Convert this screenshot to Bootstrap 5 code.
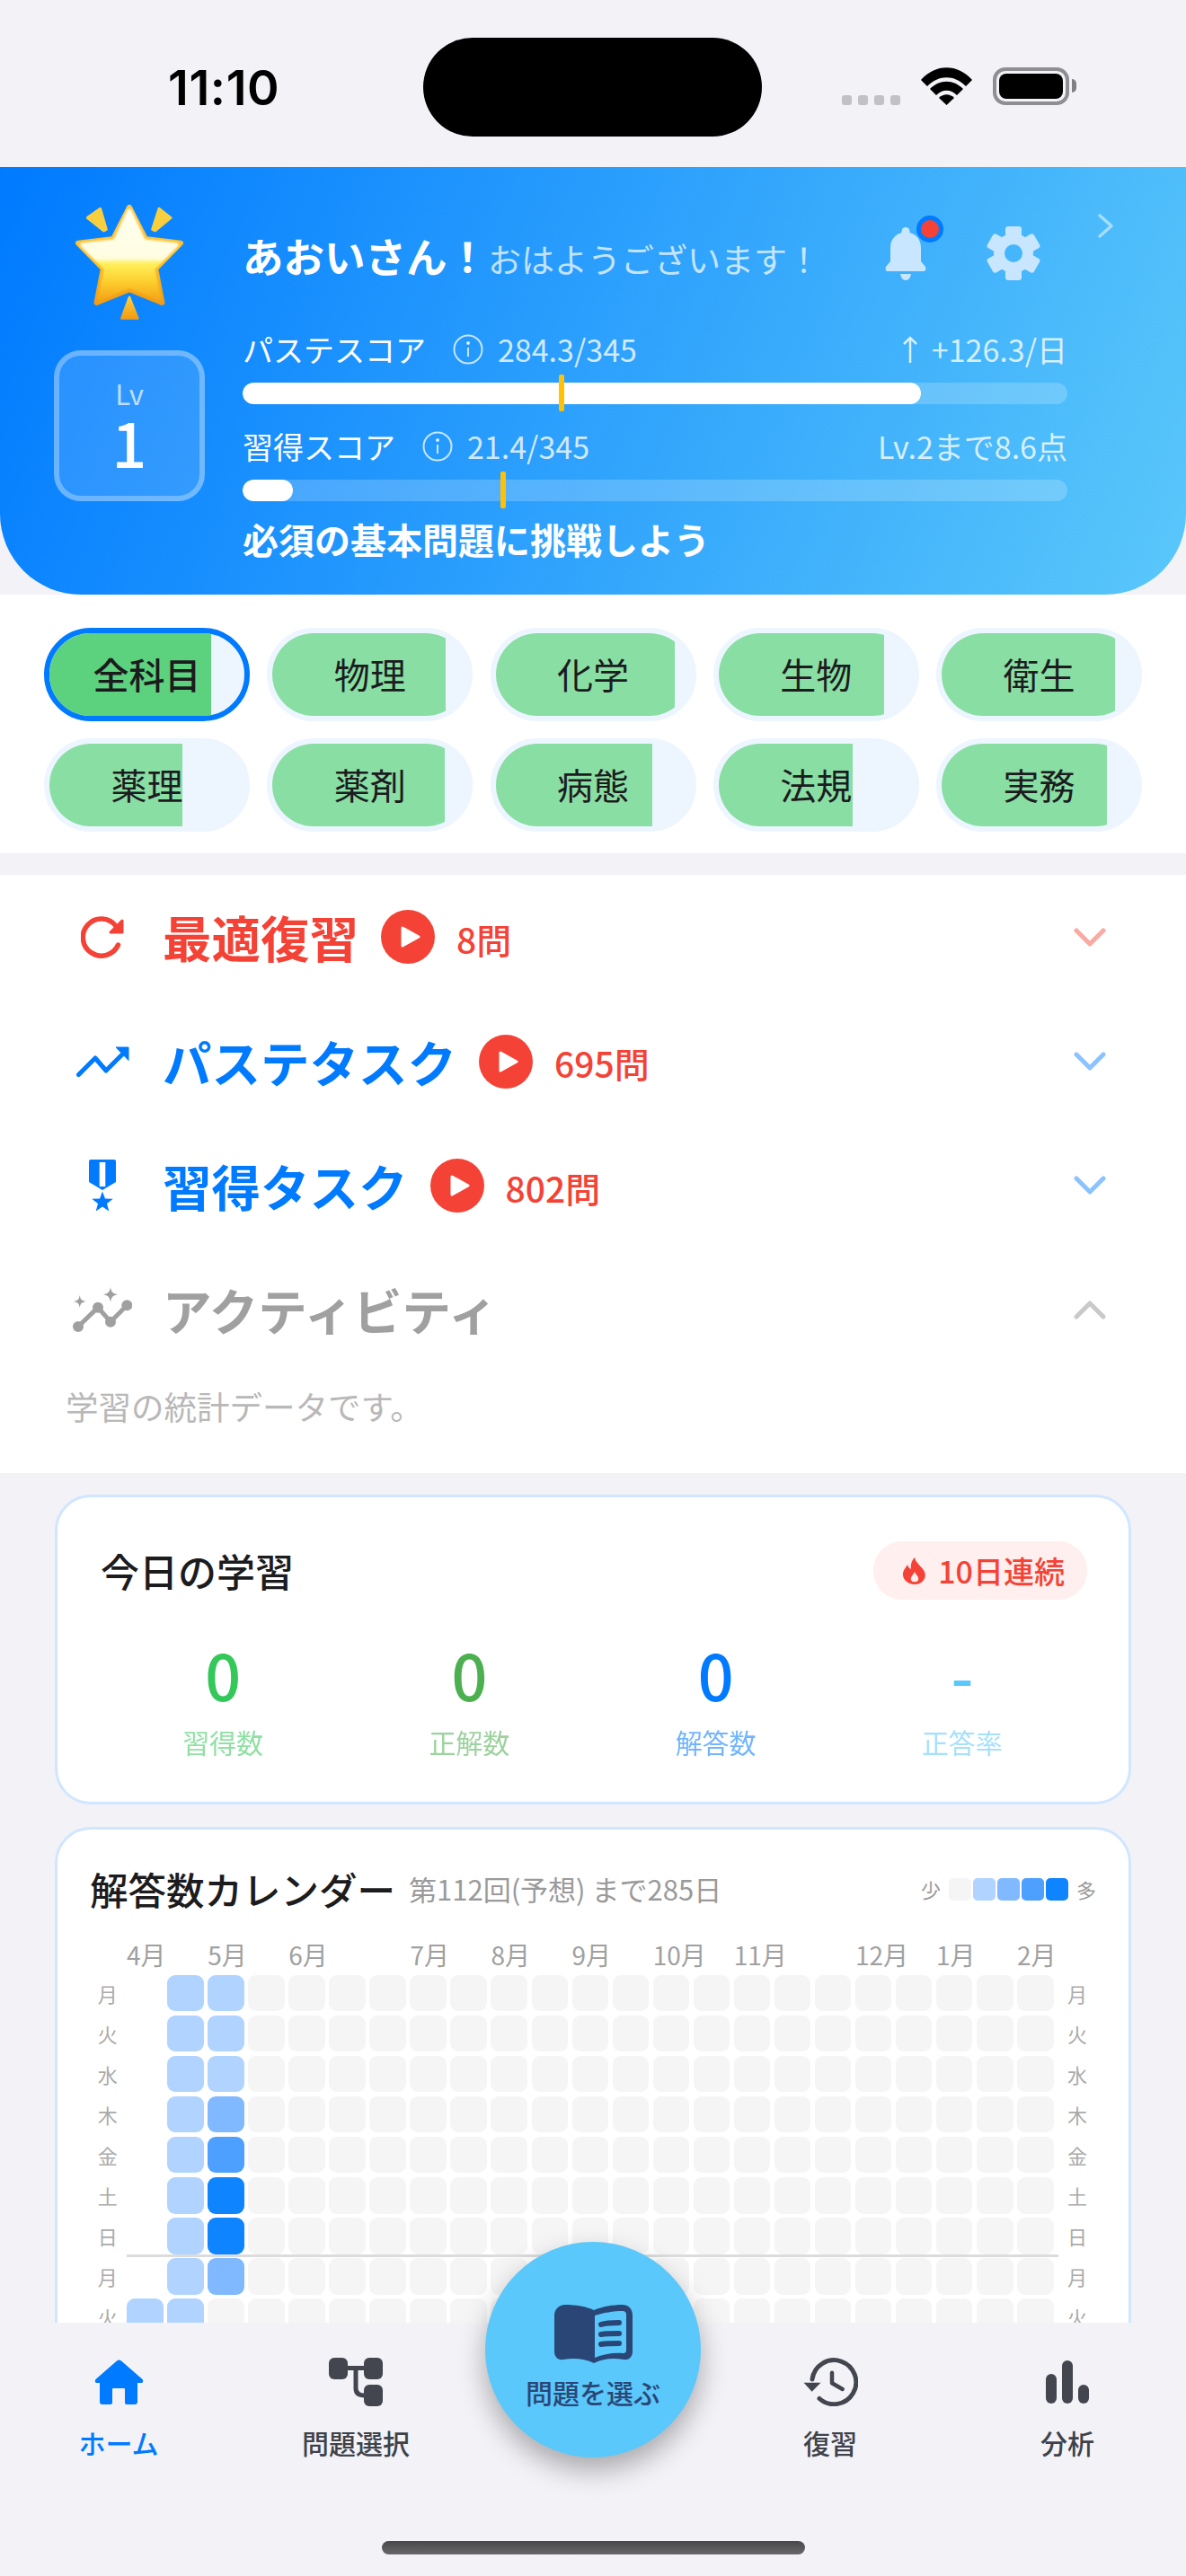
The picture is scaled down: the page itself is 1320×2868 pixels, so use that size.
<!DOCTYPE html>
<html lang="ja">

<head>
  <meta charset="UTF-8">
  <meta name="viewport" content="width=device-width, initial-scale=1">
  <title>ホーム</title>
  <link href="https://cdn.jsdelivr.net/npm/bootstrap@5.3.3/dist/css/bootstrap.min.css" rel="stylesheet">

  <style>
    body {
      width: 1320px;
      height: 2868px;
      overflow: hidden;
      background-color: #f2f2f7;
      font-family: "Noto Sans CJK JP", "Noto Sans", sans-serif;
      color: #1c1c1e;
    }

    /* status bar */
    .status-bar { height: 186px; flex: none; padding-left: 187px; }
    .status-time { width: 284px; margin-top: 68px; font-family: Inter, sans-serif; font-weight: 600; font-size: 54px; line-height: 60px; letter-spacing: .6px; color: #000; }
    .status-island { width: 377px; height: 110px; margin-top: 42px; background: #000; border-radius: 55px; }
    .status-dots { margin: 106px 0 0 89px; gap: 7px; width: 88px; }
    .status-dots i { width: 11px; height: 11px; border-radius: 3px; background: #c1c1c6; }
    .status-wifi { margin-top: 75px; }
    .status-batt { margin: 75px 0 0 23px; width: 85px; height: 42px; padding: 3px; border: 4px solid #8e8e93; border-radius: 14px; position: relative; }
    .status-batt i { display: block; height: 100%; background: #000; border-radius: 8px; }
    .status-batt::after { content: ""; position: absolute; right: -12px; top: 9px; width: 5px; height: 15px; background: #7f7f84; border-radius: 0 5px 5px 0; }

    /* scroll area */
    .app-scroll { flex: 1; min-height: 0; overflow: hidden; }

    /* header */
    .hero { height: 476px; padding: 40px 0 0 60px; background: linear-gradient(112deg, #007aff 0%, #5ac8fa 100%); border-radius: 0 0 90px 90px; color: #fff; }
    .hero-left { width: 168px; flex: none; }
    .hero-star { display: block; margin: 0 auto 33px; }
    .lv-box { height: 168px; background: rgba(255, 255, 255, .13); border: 6px solid rgba(255, 255, 255, .3); border-radius: 30px; }
    .lv-small { font-size: 31px; line-height: 30px; color: rgba(255, 255, 255, .7); margin-top: 27px; }
    .lv-num { font-size: 68px; line-height: 72px; font-weight: 500; margin-top: 3px; }
    .hero-right { width: 969px; margin-left: 42px; padding-top: 12px; }
    .hero-top { height: 129px; }
    .hero-hello { margin-top: 16px; line-height: 60px; font-size: 45.5px; font-weight: 700; width: 715px; flex: none; white-space: nowrap; }
    .hero-hello small { font-size: 37px; font-weight: 400; color: rgba(255, 255, 255, .72); }
    .hero-bell { position: relative; margin-top: 15px; width: 46px; height: 59px; flex: none; }
    .hero-dot { position: absolute; left: 35px; top: -13px; width: 30px; height: 30px; background: #f44336; border: 5px solid #007aff; border-radius: 50%; }
    .hero-gear { margin: 14px 0 0 67px; flex: none; }
    .hero-next { margin-left: 64px; flex: none; }
    .score-wrap { width: 918px; }
    .score-line { height: 44px; font-size: 34px; line-height: 44px; }
    .score-info { margin: 0 16px 0 30px; flex: none; }
    .score-val { color: rgba(255, 255, 255, .78); font-size: 34px; }
    .score-second { margin-top: 25px; }
    .score-track { position: relative; margin-top: 15px; }
    .score-track .progress { height: 24px; background: rgba(255, 255, 255, .2); border-radius: 12px; }
    .score-track .progress-bar { background: #fff; border-radius: 12px; }
    .score-mark { position: absolute; top: -9px; width: 6px; height: 41px; background: #ffc107; border-radius: 2px; }
    .hero-hint { margin-top: 17px; font-size: 40px; line-height: 50px; font-weight: 700; }

    /* chips */
    .subject-sec { height: 288px; padding: 37px 0 0 49px; background: #fff; }
    .subject-grid { display: grid; grid-template-columns: repeat(5, 229px); gap: 19px 19.25px; }
    .subject-chip { position: relative; height: 104px; overflow: hidden; background: #edf5ff; border: 6px solid #edf5ff; border-radius: 52px; font-size: 40px; line-height: 90px; text-align: center; }
    .subject-chip.is-on { border-color: #007aff; font-weight: 500; }
    .subject-fill { position: absolute; left: 0; top: 0; bottom: 0; background: #89dea4; }
    .is-on .subject-fill { background: #5cd27f; }
    .subject-name { position: relative; }

    /* task list */
    .task-sec { height: 666px; margin-top: 24px; background: #fff; }
    .task-row { height: 138.4px; padding: 0 89px 0 73px; }
    .task-ico { width: 82px; flex: none; }
    .task-title { margin-left: 26px; font-size: 54.5px; font-weight: 700; line-height: 70px; white-space: nowrap; }
    .task-play { width: 60px; height: 60px; margin-left: 25px; flex: none; }
    .task-count { margin-left: 24px; font-size: 39px; font-weight: 500; color: #f44336; padding-top: 4px; }
    .c-red { color: #f44336; }
    .c-blue { color: #007aff; }
    .c-gray { color: #a0a0a0; }
    .task-desc { margin: 13px 0 0 73px; font-size: 36.5px; line-height: 50px; color: #b8b8b8; }

    /* cards */
    .card-area { padding: 24px 61px 0; }
    .stat-card { background: #fff; border: 3px solid #d0e6ff; border-radius: 40px; }
    .today-card { height: 345px; padding: 49px 48px 0 47px; margin-bottom: 25px; }
    .today-title { margin-left: 1px; font-size: 43px; font-weight: 500; }
    .streak { height: 65px; margin-right: -2px; padding: 0 25px 0 32px; background: #ffefee; border-radius: 32px; font-size: 34px; font-weight: 500; color: #f44336; gap: 12px; }
    .today-nums { margin-top: 41px; }
    .today-num { font-size: 70px; line-height: 84px; font-weight: 500; }
    .today-lbl { margin-top: 13px; font-size: 30px; line-height: 40px; opacity: .55; }
    .c-green1 { color: #34c759; }
    .c-green2 { color: #4caf50; }
    .c-sky { color: #5ac8fa; }
    .cal-card { padding: 36px 36px 40px; }
    .cal-title { font-size: 42.5px; font-weight: 500; line-height: 60px; white-space: nowrap; }
    .cal-sub { margin-left: 15px; font-size: 31px; color: #9a9a9a; white-space: nowrap; }
    .cal-legend { gap: 2px; font-size: 22px; color: #9a9a9a; }
    .cal-legend i { width: 25px; height: 25px; border-radius: 5px; }
    .cal-legend span:first-child { margin-right: 7px; }
    .cal-legend span:last-child { margin-left: 7px; }
    .lv0 { background: #f5f5f5; }
    .lv1 { background: #b0d4ff; }
    .lv2 { background: #80b9ff; }
    .lv3 { background: #4da0ff; }
    .lv4 { background: #0f84ff; }
    .cal-grid { position: relative; display: grid; margin: 27px 0 0 3px; grid-template-columns: 33.5px repeat(23, 40.5px) 44px; grid-template-rows: 34px; grid-auto-rows: 40.55px; gap: 4.55px; }
    .cal-month { font-size: 28px; line-height: 32px; color: #a0a0a0; white-space: nowrap; }
    .cal-day { font-size: 22px; line-height: 40px; color: #aaa; text-align: center; }
    .cal-cell { border-radius: 9px; }
    .cal-line { position: absolute; left: 38px; top: 350px; width: 1037px; height: 3px; background: #dcdcdc; }

    /* bottom nav */
    .tab-bar { position: relative; height: 282px; flex: none; background: #f2f2f7; }
    .tab-item { width: 264px; padding-top: 39px; font-size: 30px; font-weight: 500; color: #3f424a; }
    .tab-item.is-on { color: #007aff; }
    .tab-ico { height: 54px; }
    .tab-lbl { margin-top: 20px; line-height: 40px; }
    .tab-fab { position: absolute; left: 540px; top: -90px; z-index: 5; width: 240px; height: 240px; padding-top: 70px; background: #5ac8fa; border-radius: 50%; box-shadow: 0 14px 30px rgba(0, 0, 0, .3); color: #2a4677; font-size: 30px; font-weight: 500; }
    .tab-fab div { line-height: 40px; margin-top: 12px; }
    .home-bar { width: 471px; height: 15px; margin: 90px auto 0; border-radius: 8px; background: linear-gradient(#48484a, #68686b); }
  </style>
</head>

<body class="d-flex flex-column">

  <!-- ステータスバー -->
  <div class="status-bar d-flex align-items-start">
    <div class="status-time">11:10</div>
    <div class="status-island"></div>
    <div class="status-dots d-flex"><i></i><i></i><i></i><i></i></div>
    <svg class="status-wifi" width="57" height="42" viewBox="0 0 57 42" fill="#000">
      <path d="M0 14C16-4.500 41-4.500 57 14L50 21C37 8 20 8 7 21Z"/>
      <path d="M10 24C21 13 36 13 47 24L40 31C33 24 24 24 17 31Z"/>
      <path d="M20 34C25 29 32 29 37 34L28.500 42Z"/>
    </svg>
    <div class="status-batt"><i></i></div>
  </div>

  <div class="app-scroll">

    <!-- ヘッダー -->
    <div class="hero d-flex">
      <div class="hero-left">
        <svg class="hero-star" width="122" height="131" viewBox="128 78 368 394">
          <defs>
            <linearGradient id="starFill" x1="0" y1="0" x2="0" y2="1">
              <stop offset="0" stop-color="#fffff0"/>
              <stop offset=".54" stop-color="#fffde0"/>
              <stop offset=".6" stop-color="#fff05c"/>
              <stop offset=".8" stop-color="#fdd030"/>
              <stop offset="1" stop-color="#f6a81a"/>
            </linearGradient>
            <linearGradient id="starEdge" x1="0" y1="0" x2="0" y2="1">
              <stop offset="0" stop-color="#fdc544"/>
              <stop offset=".5" stop-color="#fbc02d"/>
              <stop offset="1" stop-color="#f29c12"/>
            </linearGradient>
            <linearGradient id="sparkLow" x1="0" y1="0" x2="0" y2="1">
              <stop offset="0" stop-color="#fbcf3d"/>
              <stop offset="1" stop-color="#f39c12"/>
            </linearGradient>
            <filter id="starSoft" x="-10%" y="-10%" width="120%" height="120%"><feGaussianBlur stdDeviation="4"/></filter>
          </defs>
          <path d="M312 92L366 198 484 212 400 298 422 412 312 368 202 412 224 298 140 212 258 198Z" fill="url(#starEdge)" stroke="url(#starEdge)" stroke-width="18" stroke-linejoin="round"/>
          <path d="M312 104L360 206 470 218 390 298 412 398 312 356 212 398 234 298 154 218 264 206Z" fill="url(#starFill)" stroke="url(#starFill)" stroke-width="14" stroke-linejoin="round" filter="url(#starSoft)"/>
          <path d="M172 127L214 97 234 166 226 170Z" fill="#f7cf3f" stroke="#f7cf3f" stroke-width="10" stroke-linejoin="round"/>
          <path d="M390 166L412 97 450 127 398 170Z" fill="#f7cf3f" stroke="#f7cf3f" stroke-width="10" stroke-linejoin="round"/>
          <path d="M312 394L340 465 286 465Z" fill="url(#sparkLow)" stroke="url(#sparkLow)" stroke-width="8" stroke-linejoin="round"/>
        </svg>
        <div class="lv-box text-center">
          <div class="lv-small">Lv</div>
          <div class="lv-num">1</div>
        </div>
      </div>

      <div class="hero-right">
        <div class="hero-top d-flex align-items-start">
          <div class="hero-hello">あおいさん！<small>おはようございます！</small></div>
          <div class="hero-bell">
            <svg width="46" height="59" viewBox="0 0 46 59" fill="#c8e6ff" class="d-block">
              <path d="M23 0A4.500 4.500 0 0 1 27.500 4.500V6C35 8 40 14 40 23V38L45 44C46 47 45 49 43 49H3C1 49 0 47 1 44L6 38V23C6 14 11 8 18.500 6V4.500A4.500 4.500 0 0 1 23 0Z"/>
              <path d="M17 52H29C28 57 26 59 23 59 20 59 18 57 17 52Z"/>
            </svg>
            <span class="hero-dot"></span>
          </div>
          <svg class="hero-gear" width="60" height="60" viewBox="0 0 60 60" fill="#c8e6ff">
            <circle cx="30" cy="30" r="16" fill="none" stroke="#c8e6ff" stroke-width="12"/>
            <rect x="21" y="0" width="18" height="14" rx="3"/>
            <rect x="21" y="0" width="18" height="14" rx="3" transform="rotate(60 30 30)"/>
            <rect x="21" y="0" width="18" height="14" rx="3" transform="rotate(120 30 30)"/>
            <rect x="21" y="0" width="18" height="14" rx="3" transform="rotate(180 30 30)"/>
            <rect x="21" y="0" width="18" height="14" rx="3" transform="rotate(240 30 30)"/>
            <rect x="21" y="0" width="18" height="14" rx="3" transform="rotate(300 30 30)"/>
          </svg>
          <svg class="hero-next" width="17" height="27" viewBox="0 0 17 27" fill="none" stroke="rgba(255,255,255,.5)" stroke-width="3.500" stroke-linecap="round" stroke-linejoin="round">
            <path d="M2 2L15 13.500 2 25"/>
          </svg>
        </div>

        <div class="score-wrap">
          <div class="score-line d-flex align-items-center">
            <span>パステスコア</span>
            <svg class="score-info" width="34" height="34" viewBox="0 0 34 34" fill="none" stroke="rgba(255,255,255,.75)" stroke-width="2">
              <circle cx="17" cy="17" r="15.500"/>
              <path d="M17 15V25"/>
              <circle cx="17" cy="10" r="1" fill="#fff"/>
            </svg>
            <span class="score-val">284.3/345</span>
            <span class="score-val ms-auto d-flex align-items-center">
              <svg class="me-3" width="16" height="30" viewBox="0 0 16 30" fill="none" stroke="rgba(255,255,255,.8)" stroke-width="2.500"><path d="M8 30V2M1 9L8 2 15 9"/></svg>
              +126.3/日
            </span>
          </div>
          <div class="score-track">
            <div class="progress"><div class="progress-bar" style="width: 82.2%"></div></div>
            <span class="score-mark" style="left: 352px"></span>
          </div>

          <div class="score-line score-second d-flex align-items-center">
            <span>習得スコア</span>
            <svg class="score-info" width="34" height="34" viewBox="0 0 34 34" fill="none" stroke="rgba(255,255,255,.75)" stroke-width="2">
              <circle cx="17" cy="17" r="15.500"/>
              <path d="M17 15V25"/>
              <circle cx="17" cy="10" r="1" fill="#fff"/>
            </svg>
            <span class="score-val">21.4/345</span>
            <span class="score-val ms-auto">Lv.2まで8.6点</span>
          </div>
          <div class="score-track">
            <div class="progress"><div class="progress-bar" style="width: 6.100%"></div></div>
            <span class="score-mark" style="left: 287px"></span>
          </div>

          <div class="hero-hint">必須の基本問題に挑戦しよう</div>
        </div>
      </div>
    </div>

    <!-- 科目 -->
    <div class="subject-sec">
      <div class="subject-grid">
        <div class="subject-chip is-on"><span class="subject-fill" style="width: 83%"></span><span class="subject-name">全科目</span></div>
        <div class="subject-chip"><span class="subject-fill" style="width: 89%"></span><span class="subject-name">物理</span></div>
        <div class="subject-chip"><span class="subject-fill" style="width: 92%"></span><span class="subject-name">化学</span></div>
        <div class="subject-chip"><span class="subject-fill" style="width: 85%"></span><span class="subject-name">生物</span></div>
        <div class="subject-chip"><span class="subject-fill" style="width: 89%"></span><span class="subject-name">衛生</span></div>
        <div class="subject-chip"><span class="subject-fill" style="width: 68%"></span><span class="subject-name">薬理</span></div>
        <div class="subject-chip"><span class="subject-fill" style="width: 88.500%"></span><span class="subject-name">薬剤</span></div>
        <div class="subject-chip"><span class="subject-fill" style="width: 80.600%"></span><span class="subject-name">病態</span></div>
        <div class="subject-chip"><span class="subject-fill" style="width: 68.600%"></span><span class="subject-name">法規</span></div>
        <div class="subject-chip"><span class="subject-fill" style="width: 85%"></span><span class="subject-name">実務</span></div>
      </div>
    </div>

    <!-- タスク -->
    <div class="task-sec">
      <div class="task-row d-flex align-items-center">
        <div class="task-ico d-flex justify-content-center">
          <svg width="48" height="48" viewBox="0 0 48 48" fill="none">
            <path d="M39 12A20.500 20.500 0 1 0 41.500 33" stroke="#f44336" stroke-width="5.500" stroke-linecap="round"/>
            <path d="M46 6V19H33Z" fill="#f44336" stroke="#f44336" stroke-width="3" stroke-linejoin="round"/>
          </svg>
        </div>
        <div class="task-title c-red">最適復習</div>
        <svg class="task-play" viewBox="0 0 60 60"><circle cx="30" cy="30" r="30" fill="#f44336"/><path d="M24 20L42 30 24 40Z" fill="#fff" stroke="#fff" stroke-width="3" stroke-linejoin="round"/></svg>
        <div class="task-count">8問</div>
        <svg class="ms-auto" width="36" height="21" viewBox="0 0 36 21" fill="none" stroke="#fba9a3" stroke-width="5" stroke-linecap="round" stroke-linejoin="round"><path d="M3 3L18 18 33 3"/></svg>
      </div>

      <div class="task-row d-flex align-items-center">
        <div class="task-ico d-flex justify-content-center">
          <svg width="59" height="34" viewBox="0 0 59 34" fill="none">
            <path d="M2.500 31.500L21 13 33 27 53 7" stroke="#007aff" stroke-width="5" stroke-linecap="round" stroke-linejoin="round"/>
            <path d="M44 1H58V15.500Z" fill="#007aff" stroke="#007aff" stroke-width="1" stroke-linejoin="round"/>
          </svg>
        </div>
        <div class="task-title c-blue">パステタスク</div>
        <svg class="task-play" viewBox="0 0 60 60"><circle cx="30" cy="30" r="30" fill="#f44336"/><path d="M24 20L42 30 24 40Z" fill="#fff" stroke="#fff" stroke-width="3" stroke-linejoin="round"/></svg>
        <div class="task-count">695問</div>
        <svg class="ms-auto" width="36" height="21" viewBox="0 0 36 21" fill="none" stroke="#8cc3ff" stroke-width="5" stroke-linecap="round" stroke-linejoin="round"><path d="M3 3L18 18 33 3"/></svg>
      </div>

      <div class="task-row d-flex align-items-center">
        <div class="task-ico d-flex justify-content-center">
          <svg width="30" height="58" viewBox="0 0 30 58" fill="#007aff">
            <path d="M2 0H28A2 2 0 0 1 30 2V25L15 34 0 25V2A2 2 0 0 1 2 0Z"/>
            <rect x="11.700" y="3" width="6.600" height="27" fill="#fff"/>
            <path d="M15 35.500L18 43.500 26.800 43.800 20 49 22.300 57.500 15 52.500 7.700 57.500 10 49 3.200 43.800 12 43.500Z"/>
          </svg>
        </div>
        <div class="task-title c-blue">習得タスク</div>
        <svg class="task-play" viewBox="0 0 60 60"><circle cx="30" cy="30" r="30" fill="#f44336"/><path d="M24 20L42 30 24 40Z" fill="#fff" stroke="#fff" stroke-width="3" stroke-linejoin="round"/></svg>
        <div class="task-count">802問</div>
        <svg class="ms-auto" width="36" height="21" viewBox="0 0 36 21" fill="none" stroke="#8cc3ff" stroke-width="5" stroke-linecap="round" stroke-linejoin="round"><path d="M3 3L18 18 33 3"/></svg>
      </div>

      <div class="task-row d-flex align-items-center">
        <div class="task-ico d-flex justify-content-center">
          <svg width="66" height="51" viewBox="0 0 66 51" fill="#a0a0a0">
            <path d="M6 44L28 22.700 42 38.700 60.300 20.300" fill="none" stroke="#a0a0a0" stroke-width="5"/>
            <circle cx="6" cy="44" r="6"/><circle cx="28" cy="22.700" r="6"/><circle cx="42" cy="38.700" r="6"/><circle cx="60.300" cy="20.300" r="6"/>
            <path d="M42 0C43 5.500 44.500 7 50 8.300 44.500 9.500 43 11 42 17 41 11 39.500 9.500 34 8.300 39.500 7 41 5.500 42 0Z"/>
            <path d="M7.700 9C8.500 13.500 9.500 15 14.500 16 9.500 17 8.500 18.500 7.700 23 7 18.500 6 17 1 16 6 15 7 13.500 7.700 9Z"/>
          </svg>
        </div>
        <div class="task-title c-gray">アクティビティ</div>
        <svg class="ms-auto" width="36" height="21" viewBox="0 0 36 21" fill="none" stroke="#c9c9c9" stroke-width="5" stroke-linecap="round" stroke-linejoin="round"><path d="M3 18L18 3 33 18"/></svg>
      </div>

      <div class="task-desc">学習の統計データです。</div>
    </div>

    <!-- カード -->
    <div class="card-area">
      <div class="stat-card today-card">
        <div class="d-flex justify-content-between align-items-center">
          <div class="today-title">今日の学習</div>
          <div class="streak d-flex align-items-center">
            <svg width="28" height="30" viewBox="0 0 28 30">
              <path d="M14 0C15 6 22 10 25 16 28 23 22 30 14 30 6 30 0 24 1 17 2 13 5 10 6 8 7 11 8 12 10 13 9 8 11 3 14 0Z" fill="#f44336"/>
              <path d="M14 16C15 19 19 21 18 25 17 28 11 28 10 25 9 22 12 20 14 16Z" fill="#ffefee"/>
            </svg>
            <span>10日連続</span>
          </div>
        </div>
        <div class="row gx-0 text-center today-nums">
          <div class="col-3"><div class="today-num c-green1">0</div><div class="today-lbl c-green1">習得数</div></div>
          <div class="col-3"><div class="today-num c-green2">0</div><div class="today-lbl c-green2">正解数</div></div>
          <div class="col-3"><div class="today-num c-blue">0</div><div class="today-lbl c-blue">解答数</div></div>
          <div class="col-3"><div class="today-num c-sky">-</div><div class="today-lbl c-sky">正答率</div></div>
        </div>
      </div>

      <div class="stat-card cal-card">
        <div class="d-flex align-items-center">
          <div class="cal-title">解答数カレンダー</div>
          <div class="cal-sub">第112回(予想) まで285日</div>
          <div class="cal-legend ms-auto d-flex align-items-center">
            <span>少</span><i class="lv0"></i><i class="lv1"></i><i class="lv2"></i><i class="lv3"></i><i class="lv4"></i><span>多</span>
          </div>
        </div>
        <div class="cal-grid" id="calGrid">
          <div class="cal-line"></div>
        </div>
      </div>
    </div>
  </div>

  <!-- タブバー -->
  <div class="tab-bar">
    <div class="tab-fab text-center">
      <svg width="87" height="65" viewBox="0 0 87 65" class="d-block mx-auto">
        <path d="M44 6C36 2 24 0 12 0 5 0 0 5 0 12V52C0 58 4 62 10 61 22 59 34 60 44 65 54 60 65 59 77 61 83 62 87 58 87 52V12C87 5 83 0 76 0 64 0 54 2 44 6Z" fill="#2a4677"/>
        <path d="M45 12C54 9 66 7 76 7 79 7 80 9 80 11V50C80 53 79 54 76 54 66 53 54 55 45 59Z" fill="#5ac8fa"/>
        <path d="M52 22C58 20 66 20 72 20M52 33C58 32 66 32 72 32M52 44C58 43 66 43 72 43" fill="none" stroke="#2a4677" stroke-width="6" stroke-linecap="round"/>
      </svg>
      <div>問題を選ぶ</div>
    </div>

    <div class="d-flex">
      <div class="tab-item is-on text-center">
        <div class="tab-ico d-flex align-items-center justify-content-center">
          <svg width="55" height="50" viewBox="0 0 55 50" fill="#007aff">
            <path d="M25 1.500A4 4 0 0 1 30 1.500L53.500 22C55 24 54 26 52 26H48V47A3 3 0 0 1 45 50H36A2 2 0 0 1 34 48V33A1 1 0 0 0 33 32H21A1 1 0 0 0 20 33V48A2 2 0 0 1 18 50H9A3 3 0 0 1 6 47V26H3C1 26 0 24 1.500 22Z"/>
          </svg>
        </div>
        <div class="tab-lbl">ホーム</div>
      </div>
      <div class="tab-item text-center">
        <div class="tab-ico d-flex align-items-center justify-content-center">
          <svg width="61" height="54" viewBox="0 0 61 54" fill="#43464f">
            <rect x="0" y="0" width="21" height="24" rx="6"/>
            <rect x="39" y="0" width="21" height="24" rx="6"/>
            <rect x="39" y="30" width="21" height="24" rx="6"/>
            <path d="M20 11.500H40M30 11.500V34C30 39 33 42 40 42" fill="none" stroke="#43464f" stroke-width="5"/>
          </svg>
        </div>
        <div class="tab-lbl">問題選択</div>
      </div>
      <div class="tab-item"></div>
      <div class="tab-item text-center">
        <div class="tab-ico d-flex align-items-center justify-content-center">
          <svg width="61" height="54" viewBox="0 0 61 54" fill="none" stroke="#43464f" stroke-width="5" stroke-linecap="round" stroke-linejoin="round">
            <path d="M10 24A24.500 24.500 0 1 1 18 45.500"/>
            <path d="M0.500 27.700H19.500L9.700 37.700Z" fill="#43464f" stroke="none"/>
            <path d="M32 16.700V28.300L43.700 35" stroke-width="4.500"/>
          </svg>
        </div>
        <div class="tab-lbl">復習</div>
      </div>
      <div class="tab-item text-center">
        <div class="tab-ico d-flex align-items-center justify-content-center">
          <svg width="48" height="48" viewBox="0 0 48 48" fill="#43464f">
            <rect x="0" y="15" width="12" height="33" rx="6"/>
            <rect x="18" y="0" width="12" height="48" rx="6"/>
            <rect x="36" y="27" width="12" height="21" rx="6"/>
          </svg>
        </div>
        <div class="tab-lbl">分析</div>
      </div>
    </div>

    <div class="home-bar"></div>
  </div>

<script>
  // カレンダーのマス目を作る
  const grid = document.getElementById("calGrid");
  const months = { 0: "4月", 2: "5月", 4: "6月", 7: "7月", 9: "8月", 11: "9月", 13: "10月", 15: "11月", 18: "12月", 20: "1月", 22: "2月" };
  const days = ["月", "火", "水", "木", "金", "土", "日", "月", "火"];
  // 色の付いている列だけ書いておく (col: 行ごとのレベル)
  const levels = {
    0: [-1, -1, -1, -1, -1, -1, -1, -1, 1],
    1: [1, 1, 1, 1, 1, 1, 1, 1, 1],
    2: [1, 1, 1, 2, 3, 4, 4, 2, 0]
  };

  function addBox(cls, text, col, row) {
    const el = document.createElement("div");
    el.className = cls;
    el.textContent = text;
    el.style.gridColumn = col;
    el.style.gridRow = row;
    grid.appendChild(el);
  }

  for (const c in months) {
    addBox("cal-month", months[c], Number(c) + 2, 1);
  }

  days.forEach((d, r) => {
    addBox("cal-day", d, 1, r + 2);
    addBox("cal-day", d, 25, r + 2);
    for (let c = 0; c < 23; c++) {
      const lv = levels[c] ? levels[c][r] : 0;
      if (lv >= 0) addBox("cal-cell lv" + lv, "", c + 2, r + 2);
    }
  });
</script>

<script src="https://cdn.jsdelivr.net/npm/bootstrap@5.3.3/dist/js/bootstrap.bundle.min.js"></script>
</body>
</html>
